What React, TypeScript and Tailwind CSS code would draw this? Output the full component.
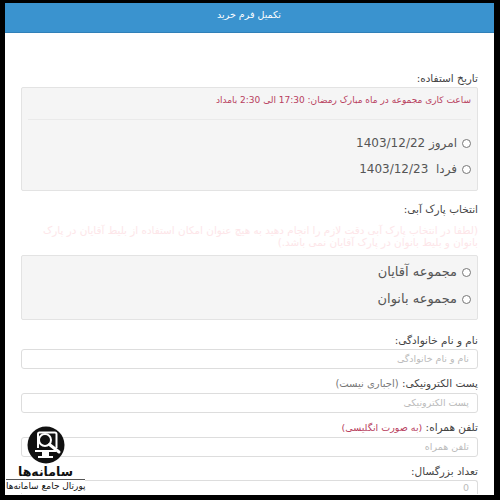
const font = "font-['DejaVu_Sans',sans-serif]";

function Radio({ children }: { children: React.ReactNode }) {
  return (
    <div className="flex items-center h-[26px] gap-[5px] text-[13px] text-[#555]">
      <span className="w-[9px] h-[9px] rounded-full border border-[#777] bg-white shrink-0" />
      <span>{children}</span>
    </div>
  );
}

function Label({ children, className = "" }: { children: React.ReactNode; className?: string }) {
  return <div className={`text-[10.5px] leading-[14px] font-medium text-[#444] ${className}`}>{children}</div>;
}

function Field({ placeholder, className = "h-[20px] rounded-[3px] items-center" }: { placeholder: string; className?: string }) {
  return (
    <div className={`mt-[2px] shrink-0 border border-[#ddd] bg-white flex pr-[8px] text-[9.5px] text-[#bbb] ${className}`}>
      {placeholder}
    </div>
  );
}

function Logo() {
  return (
    <div className="absolute left-[6px] top-[426px] w-[79px] flex flex-col items-center">
      <svg width="38" height="38" viewBox="0 0 38 38">
        <circle cx="19" cy="19" r="18.5" fill="#111" />
        <path d="M11 22 V8 a1.5 1.5 0 0 1 1.5 -1.5 H28 a1.5 1.5 0 0 1 1.5 1.5 V22" fill="none" stroke="#fff" strokeWidth="2" />
        <rect x="8" y="24" width="21" height="2" fill="#fff" />
        <rect x="15" y="26" width="7" height="4" fill="#fff" />
        <rect x="11" y="30" width="15" height="2" fill="#fff" />
        <circle cx="18" cy="14" r="6" fill="#111" stroke="#fff" strokeWidth="2" />
        <path d="M22.5 18.5 L32 26" stroke="#fff" strokeWidth="3" strokeLinecap="round" />
      </svg>
      <div className="text-[12.5px] leading-[15px] font-bold text-[#111] border-b border-[#555] w-full text-center">
        سامانه‌ها
      </div>
      <div className="text-[9px] leading-[13px] font-medium text-[#111] whitespace-nowrap bg-white w-full text-center">
        پورتال جامع سامانه‌ها
      </div>
    </div>
  );
}

export default function App() {
  return (
    <div className={`relative w-[500px] h-[500px] bg-black pt-[3px] pl-[5px] pr-[6px] pb-[5px] overflow-hidden ${font}`}>
      <div dir="rtl" className="h-full bg-white overflow-hidden flex flex-col">
        <div className="h-[30px] shrink-0 bg-[#3a93cf] border-b border-[#3080b8] text-white text-[9.5px] font-medium text-center pt-[5px] pr-[1px]">
          تکمیل فرم خرید
        </div>
        <div className="flex-1 flex flex-col px-[16px] pt-[38px]">
          <Label>تاریخ استفاده:</Label>
          <div className="h-[104px] shrink-0 mt-[2px] bg-[#f5f5f5] border border-[#e3e3e3] rounded-[2px] px-[6px]">
            <div className="text-[9px] leading-[12px] pt-[6px] pb-[13px] border-b border-[#eaeaea] text-[#b8405e]">
              ساعت کاری مجموعه در ماه مبارک رمضان: 17:30 الی 2:30 بامداد
            </div>
            <div className="mt-[10px]">
              <Radio><span className="text-[12px]">امروز 1403/12/22</span></Radio>
              <Radio><span className="text-[12px]">فردا&nbsp;&nbsp;1403/12/23</span></Radio>
            </div>
          </div>
          <Label className="mt-[11px]">انتخاب پارک آبی:</Label>
          <div className="text-[10.4px] leading-[12px] mt-[8px] text-[#fde6e9]">
            (لطفا در انتخاب پارک آبی دقت لازم را انجام دهید به هیچ عنوان امکان استفاده از بلیط آقایان در پارک بانوان و بلیط بانوان در پارک آقایان نمی باشد.)
          </div>
          <div className="h-[65px] shrink-0 mt-[7px] bg-[#f5f5f5] border border-[#e3e3e3] rounded-[2px] px-[6px] pt-[3px]">
            <Radio>مجموعه آقایان</Radio>
            <div className="mt-[1px]">
              <Radio>مجموعه بانوان</Radio>
            </div>
          </div>
          <Label className="mt-[13px]">نام و نام خانوادگی:</Label>
          <Field placeholder="نام و نام خانوادگی" />
          <Label className="mt-[7px]">
            پست الکترونیکی: <span className="font-normal text-[10px] text-[#777]">(اجباری نیست)</span>
          </Label>
          <Field placeholder="پست الکترونیکی" />
          <Label className="mt-[7px]">
            تلفن همراه: <span className="font-normal text-[9.5px] text-[#b8405e]">(به صورت انگلیسی)</span>
          </Label>
          <Field placeholder="تلفن همراه" />
          <Label className="mt-[7px]">تعداد بزرگسال:</Label>
          <Field placeholder="0" className="h-[14px] border-b-0 rounded-t-[3px] items-start pt-[2px] leading-[10px]" />
        </div>
      </div>
      <Logo />
    </div>
  );
}
